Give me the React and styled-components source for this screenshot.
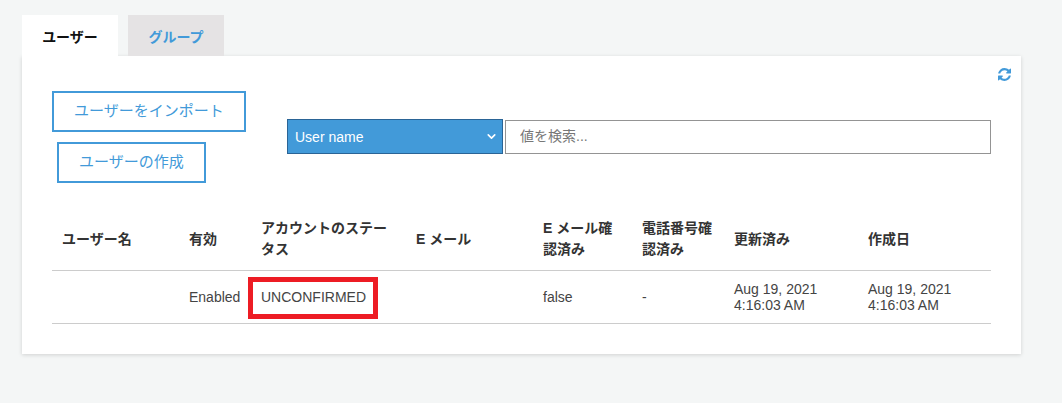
import React from 'react'
import styled, { createGlobalStyle } from 'styled-components'
import { FiChevronDown } from 'react-icons/fi'

const GlobalStyle = createGlobalStyle`
  html, body {
    margin: 0;
    background: #f4f6f6;
    font-family: "Liberation Sans", "Noto Sans CJK JP", sans-serif;
    font-size: 14px;
    color: #444;
  }
`

const Page = styled.div`
  padding: 15px 41px 49px 22px;
`

const Tabs = styled.div`
  display: flex;
  gap: 10px;
`

const Tab = styled.div`
  width: 96px;
  height: 41px;
  display: flex;
  align-items: center;
  justify-content: center;
  font-weight: bold;
  background: ${p => (p.$active ? '#fff' : '#e5e3e4')};
  color: ${p => (p.$active ? '#111' : '#429ad9')};
`

const Panel = styled.div`
  background: #fff;
  box-shadow: 0 1px 4px rgba(0,0,0,0.15);
  padding: 12px 30px 30px;
`

const RefreshRow = styled.div`
  display: flex;
  justify-content: flex-end;
  align-items: flex-start;
  height: 23px;
  margin-right: -20px;
  color: #429ad9;
`

const Toolbar = styled.div`
  display: flex;
  align-items: center;
`

const ButtonStack = styled.div`
  width: 235px;
  display: flex;
  flex-direction: column;
  align-items: flex-start;
  gap: 10px;
`

const OutlineButton = styled.button`
  height: 41px;
  padding: 0 20px 5px;
  margin-left: ${p => p.$indent || 0}px;
  background: #fff;
  border: 2px solid #429ad9;
  color: #429ad9;
  font: inherit;
  font-size: 15px;
`

const Search = styled.div`
  flex: 1;
  display: flex;
  gap: 2px;
  margin-bottom: 1px;
`

const SelectWrap = styled.div`
  position: relative;
  width: 216px;
  color: #fff;
`

const SelectBox = styled.select`
  appearance: none;
  width: 100%;
  height: 35px;
  padding: 0 7px;
  background: #429ad9;
  border: 1px solid #2a6496;
  color: #fff;
  font: inherit;
`

const Chevron = styled.span`
  position: absolute;
  top: 11px;
  right: 5px;
  pointer-events: none;
`

const SearchInput = styled.input`
  flex: 1;
  height: 34px;
  box-sizing: border-box;
  margin-top: 1px;
  padding: 0 14px 3px;
  border: 1px solid #949494;
  font: inherit;
  outline: 0;

  &::placeholder {
    color: #777;
    opacity: 1;
  }
`

const Table = styled.table`
  width: 100%;
  margin-top: 25px;
  table-layout: fixed;
  border-collapse: collapse;
`

const Col = styled.col`
  width: ${p => p.$w}px;
`

const Th = styled.th`
  padding: 10px;
  text-align: left;
  font-weight: bold;
  line-height: 21px;
  color: #333;
  border-bottom: 1px solid #ccc;
`

const Td = styled.td`
  position: relative;
  padding: 10px;
  line-height: 16px;
  border-bottom: 1px solid #ccc;
`

const Highlight = styled.span`
  position: absolute;
  top: 6px;
  left: -3px;
  width: 130px;
  height: 42px;
  box-sizing: border-box;
  border: 5px solid #ed1c24;
`

const RefreshIcon = () => (
  <svg width="13" height="13" viewBox="128 128 1536 1536" fill="currentColor">
    <path d="M1639 1056q0 5-1 7-64 268-268 434.5t-478 166.5q-146 0-282.5-55t-243.5-157l-129 129q-19 19-45 19t-45-19-19-45v-448q0-26 19-45t45-19h448q26 0 45 19t19 45-19 45l-137 137q71 66 161 102t187 36q134 0 250-65t186-179q11-17 53-117 8-23 30-23h192q13 0 22.5 9.5t9.5 22.5zm25-800v448q0 26-19 45t-45 19h-448q-26 0-45-19t-19-45 19-45l138-138q-148-137-349-137-134 0-250 65t-186 179q-11 17-53 117-8 23-30 23h-199q-13 0-22.5-9.5t-9.5-22.5v-7q65-268 270-434.5t480-166.5q146 0 284 55.5t245 156.5l130-129q19-19 45-19t45 19 19 45z" />
  </svg>
)

const columns = [
  { label: 'ユーザー名', width: 127 },
  { label: '有効', width: 72 },
  { label: 'アカウントのステータス', width: 155 },
  { label: 'E メール', width: 127 },
  { label: 'E メール確認済み', width: 99 },
  { label: '電話番号確認済み', width: 92 },
  { label: '更新済み', width: 134 },
  { label: '作成日', width: 133 }
]

const App = () => (
  <Page>
    <GlobalStyle />
    <Tabs>
      <Tab $active>ユーザー</Tab>
      <Tab>グループ</Tab>
    </Tabs>
    <Panel>
      <RefreshRow>
        <RefreshIcon />
      </RefreshRow>
      <Toolbar>
        <ButtonStack>
          <OutlineButton>ユーザーをインポート</OutlineButton>
          <OutlineButton $indent={5}>ユーザーの作成</OutlineButton>
        </ButtonStack>
        <Search>
          <SelectWrap>
            <SelectBox defaultValue="username">
              <option value="username">User name</option>
            </SelectBox>
            <Chevron>
              <FiChevronDown size={13} strokeWidth={3} />
            </Chevron>
          </SelectWrap>
          <SearchInput placeholder="値を検索..." />
        </Search>
      </Toolbar>
      <Table>
        <colgroup>
          {columns.map(c => <Col key={c.label} $w={c.width} />)}
        </colgroup>
        <thead>
          <tr>
            {columns.map(c => <Th key={c.label}>{c.label}</Th>)}
          </tr>
        </thead>
        <tbody>
          <tr>
            <Td />
            <Td>Enabled</Td>
            <Td>
              UNCONFIRMED
              <Highlight />
            </Td>
            <Td />
            <Td>false</Td>
            <Td>-</Td>
            <Td>Aug 19, 2021<br />4:16:03 AM</Td>
            <Td>Aug 19, 2021<br />4:16:03 AM</Td>
          </tr>
        </tbody>
      </Table>
    </Panel>
  </Page>
)

export default App
